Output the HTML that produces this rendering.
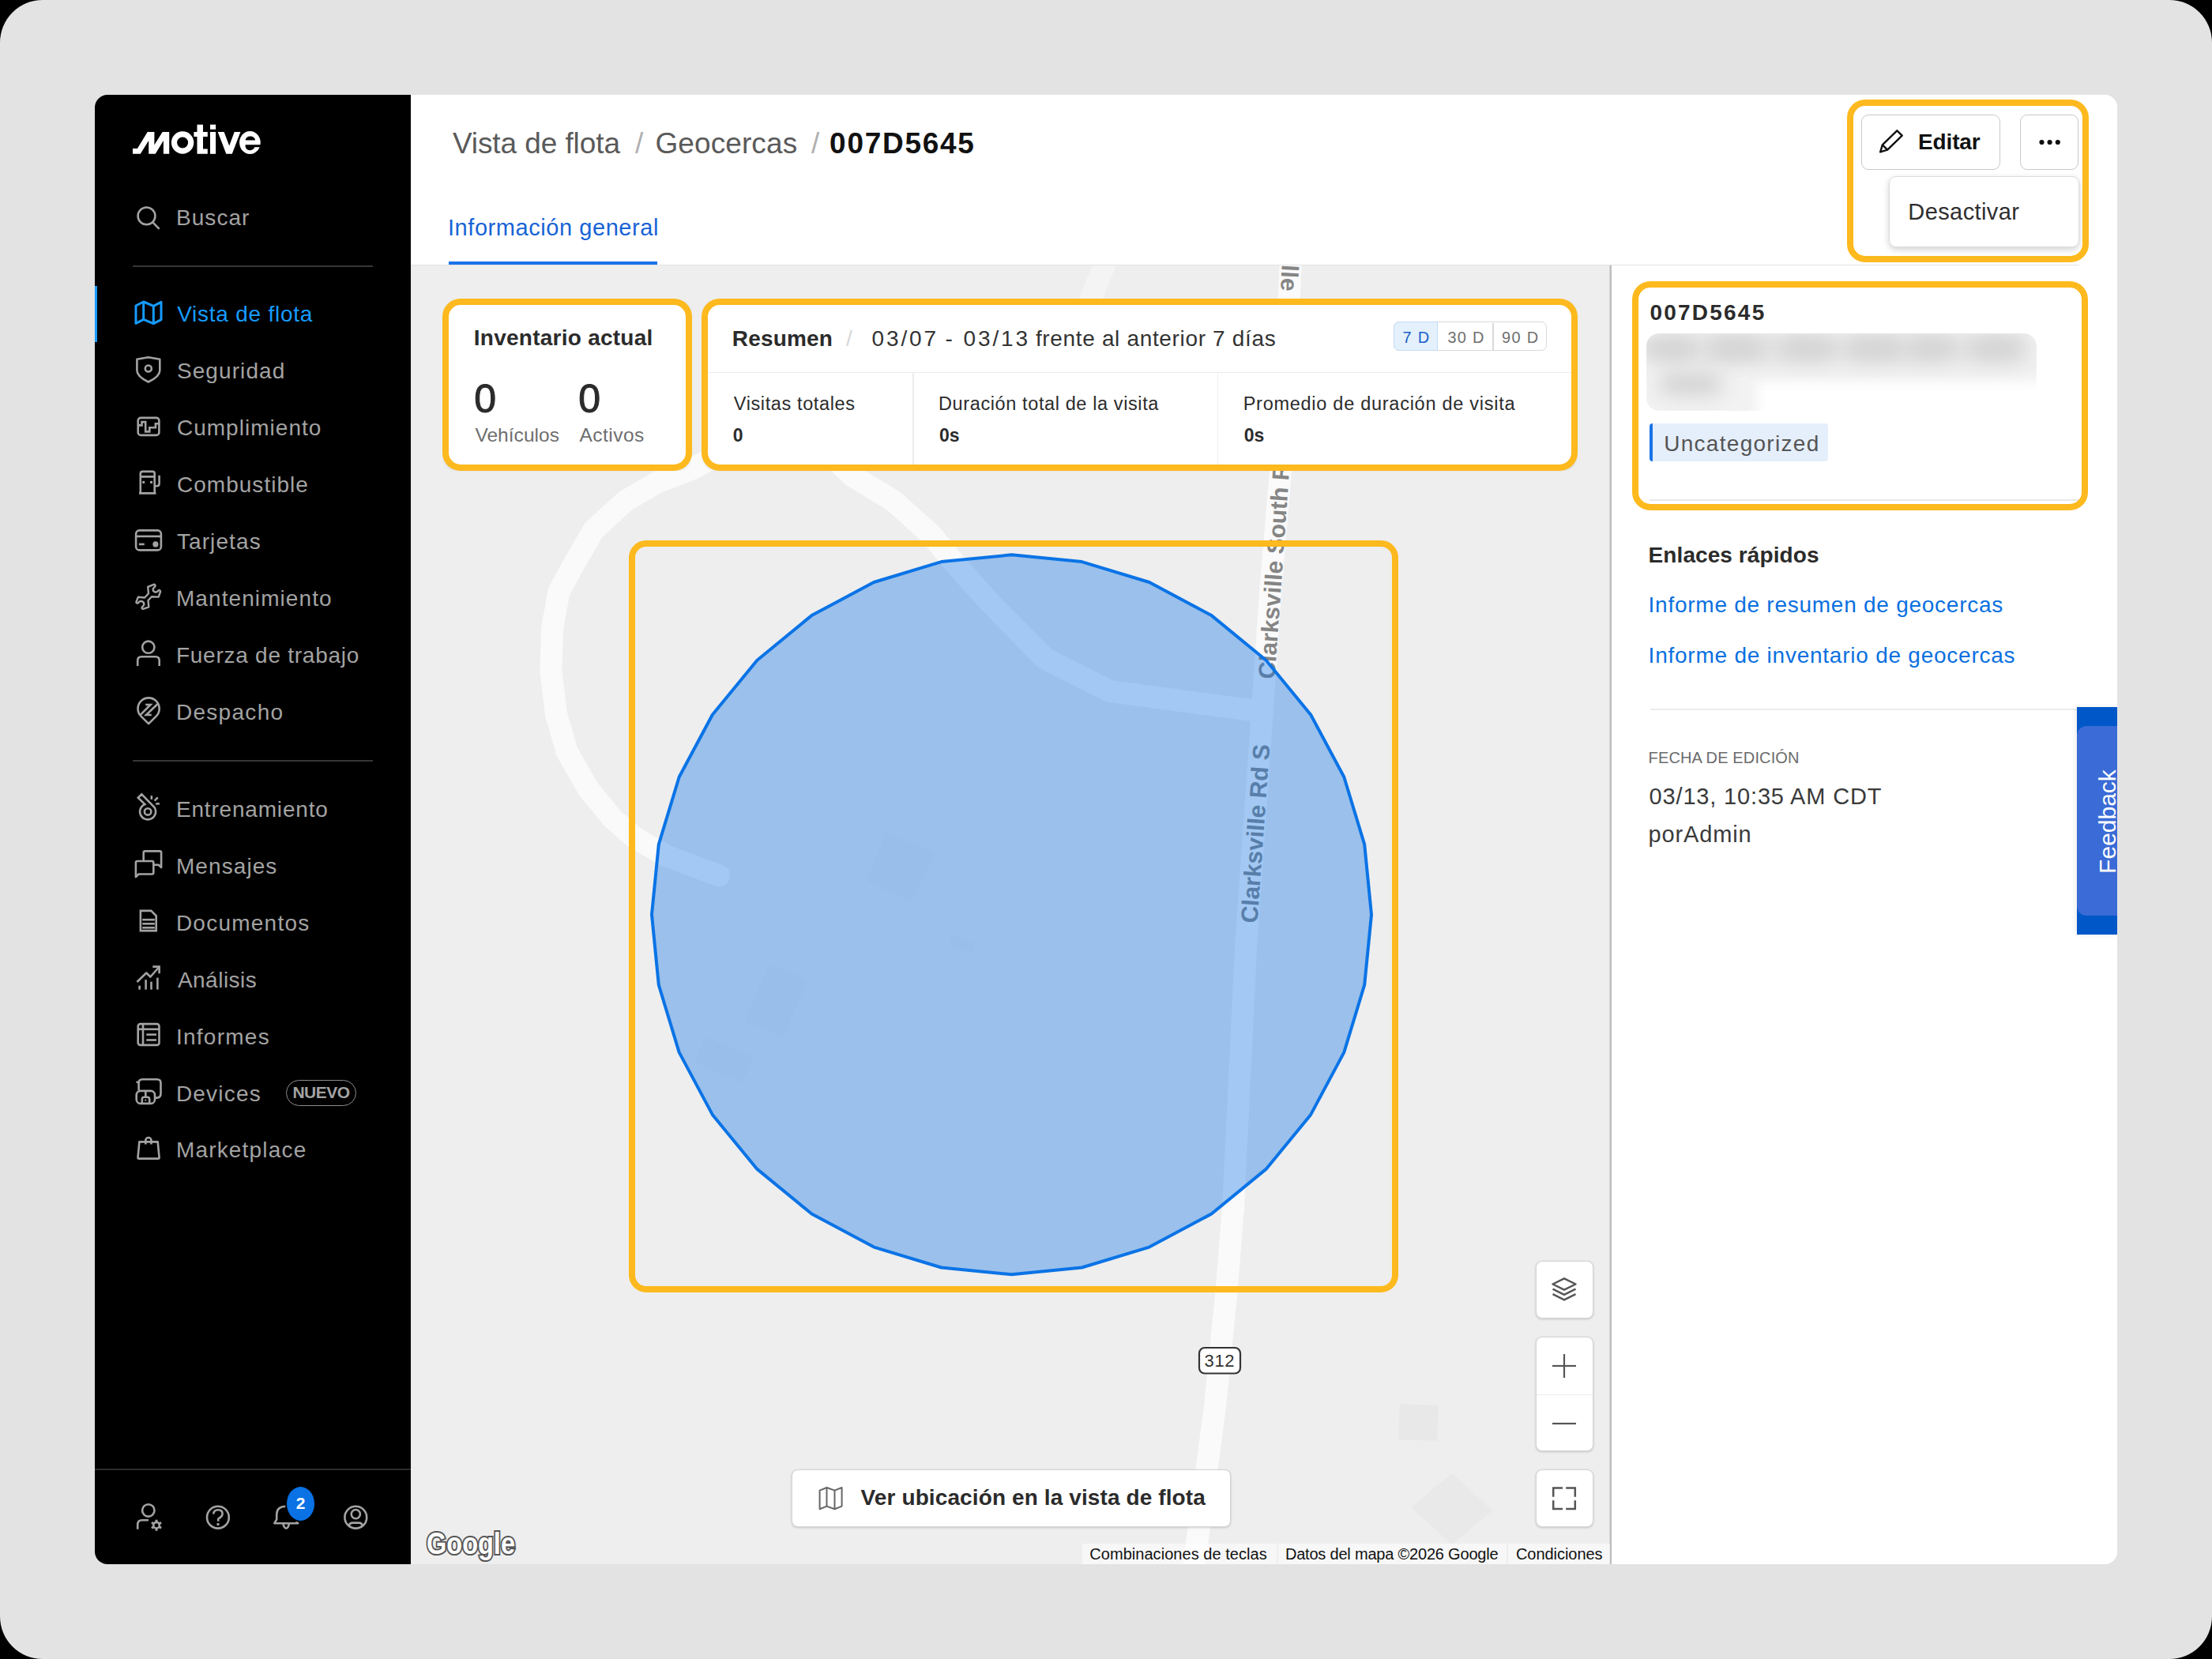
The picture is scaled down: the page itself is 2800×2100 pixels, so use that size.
<!DOCTYPE html>
<html><head><meta charset="utf-8"><title>Geocerca 007D5645</title>
<style>
html,body{margin:0;padding:0}
body{width:2800px;height:2100px;background:#000;overflow:hidden;position:relative;font-family:"Liberation Sans",sans-serif}
.t{position:absolute;white-space:nowrap;line-height:1}
</style></head><body>
<div style="position:absolute;left:0;top:0;width:2800px;height:2100px;background:#e3e3e3;border-radius:54px"></div>
<div style="position:absolute;left:120px;top:120px;width:2560px;height:1860px;border-radius:16px;overflow:hidden;background:#fff">
<div style="position:absolute;left:-120px;top:-120px;width:2800px;height:2100px">
<div style="position:absolute;left:120px;top:120px;width:400.0px;height:1860.0px;background:#000"></div>
<div style="position:absolute;left:168px;top:335.5px;width:304.0px;height:2.0px;background:#363636"></div>
<div style="position:absolute;left:168px;top:962px;width:304.0px;height:2.0px;background:#363636"></div>
<div style="position:absolute;left:120px;top:1859px;width:400.0px;height:2.0px;background:#2c2c2c"></div>
<div style="position:absolute;left:120px;top:362px;width:3.0px;height:71.0px;background:#169bff"></div>
<div style="position:absolute;left:361.9px;top:1366.8px;width:87.2px;height:31.5px;border:1.5px solid #8c8c8c;border-radius:18px"></div>
<div style="position:absolute;left:520px;top:120px;width:2160.0px;height:216.0px;background:#fff"></div>
<div style="position:absolute;left:520px;top:334.6px;width:2112.0px;height:1.4px;background:#e2e2e2"></div>
<div style="position:absolute;left:568px;top:331px;width:264.0px;height:4.0px;background:#1a73e8"></div>
<div style="position:absolute;left:2355.5px;top:144.5px;width:174px;height:68px;border:1.5px solid #c9c9c9;border-radius:9px;background:#fff"></div>
<div style="position:absolute;left:2557.3px;top:144.5px;width:71.4px;height:68px;border:1.5px solid #c9c9c9;border-radius:9px;background:#fff"></div>
<div style="position:absolute;left:2391.3px;top:223px;width:239.2px;height:87.6px;border:1px solid #dcdcdc;border-radius:9px;background:#fff;box-shadow:0 3px 8px rgba(0,0,0,.18)"></div>
<svg style="position:absolute;left:520px;top:336px" width="1518" height="1644" viewBox="520 336 1518 1644">
<rect x="520" y="336" width="1518" height="1644" fill="#eeeeee"/>
<path d="M1400,330 L1372,400" stroke="#f4f4f4" stroke-width="28" fill="none"/>
<path d="M910,1108.3 L842.5,1083 L802,1059.3 L775,1035.7 L744.6,998.6 L717.6,951.3 L704,904 L697.4,850 L699,796 L707.5,748.8 L727.8,711.6 L751.4,671 L791.9,634 L832.4,610.4 L876.3,593.5 L930,565 L1000,550 L1045,570 L1079,602.6 L1131,634 L1178.7,677 L1212.6,718 L1253.3,763 L1322.7,833.6 L1405,874.9 L1598,901" stroke="#fafafa" stroke-width="28" fill="none" stroke-linecap="round" stroke-linejoin="round"/>
<path d="M1634,330 L1621,597 L1608.8,740 L1599.6,874 L1595,940 L1577,1200 L1561,1530 L1552,1640 L1538,1780 L1511,1985" stroke="#fafafa" stroke-width="28" fill="none" stroke-linejoin="round"/>
<g fill="#ebebeb">
<polygon points="1122,1053.7 1183.5,1079 1154.5,1140.5 1096.7,1115.2"/>
<polygon points="1205,1182 1234,1194.8 1228.7,1207.4 1199.7,1194.8"/>
<polygon points="973.7,1220 1022.5,1240 991.8,1312.3 943,1292.4"/>
<polygon points="892.3,1312.3 953.8,1337.6 939.3,1370.2 879.7,1344.9"/>
</g>
<rect x="1771" y="1778" width="49" height="45" fill="#e8e8e8" transform="rotate(2 1795 1800)"/>
<polygon points="1838,1865 1889,1912 1838,1955 1786,1908" fill="#e9e9e9"/>
<g font-family="Liberation Sans" font-weight="bold" font-size="30" fill="#858585">
<text transform="translate(1591.5 1169) rotate(-86)">Clarksville Rd S</text>
<text transform="translate(1613.5 860) rotate(-86)">Clarksville South Rd</text>
<text transform="translate(1628.9 218.2) rotate(93)">Clarksville</text>
</g>
<polygon points="1736.0,1157.8 1727.2,1246.7 1701.3,1332.1 1659.2,1410.9 1602.6,1479.9 1533.6,1536.5 1454.8,1578.6 1369.4,1604.5 1280.5,1613.3 1191.6,1604.5 1106.2,1578.6 1027.4,1536.5 958.4,1479.9 901.8,1410.9 859.7,1332.1 833.8,1246.7 825.0,1157.8 833.8,1068.9 859.7,983.5 901.8,904.7 958.4,835.7 1027.4,779.1 1106.2,737.0 1191.6,711.1 1280.5,702.3 1369.4,711.1 1454.8,737.0 1533.6,779.1 1602.6,835.7 1659.2,904.7 1701.3,983.5 1727.2,1068.9" fill="#0b73e6" fill-opacity="0.37" stroke="#0a73e6" stroke-width="4" stroke-linejoin="round"/>
<rect x="1518" y="1706" width="52" height="32.5" rx="7" fill="#fff" stroke="#333" stroke-width="2.2"/>
<text x="540" y="1967" font-family="Liberation Sans" font-weight="bold" font-size="39" fill="#fff" stroke="#555" stroke-width="4.2" paint-order="stroke" textLength="112" lengthAdjust="spacingAndGlyphs">Google</text>
</svg>
<div style="position:absolute;left:2037px;top:336px;width:1.0px;height:1644.0px;background:#d8d8d8"></div>
<div style="position:absolute;left:2038px;top:336px;width:1.5px;height:1644.0px;background:#bdbdbd"></div>
<div style="position:absolute;left:1943.6px;top:1596px;width:73.0px;height:73.0px;border:1px solid #d4d4d4;border-radius:8px;background:#fff;box-shadow:0 1px 3px rgba(0,0,0,.18);box-sizing:border-box"></div>
<div style="position:absolute;left:1943.6px;top:1692.2px;width:73.0px;height:145.1px;border:1px solid #d4d4d4;border-radius:8px;background:#fff;box-shadow:0 1px 3px rgba(0,0,0,.18);box-sizing:border-box"></div>
<div style="position:absolute;left:1944.6px;top:1764.7px;width:71.0px;height:1.2px;background:#ececec"></div>
<div style="position:absolute;left:1943.6px;top:1860.3px;width:73.0px;height:73.2px;border:1px solid #d4d4d4;border-radius:8px;background:#fff;box-shadow:0 1px 3px rgba(0,0,0,.18);box-sizing:border-box"></div>
<div style="position:absolute;left:1001.8px;top:1860px;width:556.6px;height:73.4px;border:1px solid #d4d4d4;border-radius:8px;background:#fff;box-shadow:0 1px 3px rgba(0,0,0,.18);box-sizing:border-box"></div>
<div style="position:absolute;left:1369.5px;top:1953.5px;width:246.9px;height:26.5px;background:rgba(255,255,255,.5)"></div>
<div style="position:absolute;left:1617.5px;top:1953.5px;width:289.5px;height:26.5px;background:rgba(255,255,255,.5)"></div>
<div style="position:absolute;left:1909px;top:1953.5px;width:129.0px;height:26.5px;background:rgba(255,255,255,.5)"></div>
<div style="position:absolute;left:564px;top:382px;width:308.0px;height:210.0px;background:#fff;border-radius:14px;box-shadow:0 1px 4px rgba(0,0,0,.3)"></div>
<div style="position:absolute;left:892px;top:382px;width:1101.0px;height:210.0px;background:#fff;border-radius:14px;box-shadow:0 1px 4px rgba(0,0,0,.3)"></div>
<div style="position:absolute;left:896px;top:470.5px;width:1094.0px;height:1.5px;background:#ececec"></div>
<div style="position:absolute;left:1155.2px;top:472px;width:1.5px;height:118.0px;background:#ececec"></div>
<div style="position:absolute;left:1540.8px;top:472px;width:1.5px;height:118.0px;background:#ececec"></div>
<div style="position:absolute;left:1764px;top:407.2px;width:192.3px;height:35.1px;border:1.5px solid #d9d9d9;border-radius:7px;background:#fff"></div>
<div style="position:absolute;left:1764px;top:407.2px;width:54.4px;height:35.1px;border:1.5px solid #c3dcf5;border-radius:7px 0 0 7px;background:#e4f0fc"></div>
<div style="position:absolute;left:1889.3px;top:408.7px;width:1.5px;height:35.1px;background:#d9d9d9"></div>
<div style="position:absolute;left:2040px;top:336px;width:640.0px;height:1644.0px;background:#fff"></div>
<div style="position:absolute;left:2087.6px;top:632px;width:547.2px;height:1.5px;background:#e8e8e8"></div>
<div style="position:absolute;left:2088.6px;top:897px;width:540.4px;height:2.0px;background:#ececec"></div>
<div style="position:absolute;left:2087.6px;top:536px;width:226.0px;height:47.6px;background:#e5effb;border-radius:4px"></div>
<div style="position:absolute;left:2087.6px;top:536px;width:4.0px;height:47.6px;background:#1a73e8;border-radius:4px 0 0 4px"></div>
<div style="position:absolute;left:2084px;top:422px;width:494px;height:98px;overflow:hidden;border-radius:16px"><div style="position:absolute;left:-10px;top:-10px;width:514px;height:70px;background:#f0f0f0;filter:blur(8px)"></div><div style="position:absolute;left:-10px;top:40px;width:150px;height:70px;background:#f2f2f2;filter:blur(8px)"></div><div style="position:absolute;left:20px;top:6px;width:460px;height:26px;background:#e2e2e2;border-radius:12px;filter:blur(12px)"></div><div style="position:absolute;left:-7px;top:5px;width:70px;height:28px;background:#d2d2d2;border-radius:14px;filter:blur(12px)"></div><div style="position:absolute;left:78px;top:5px;width:72px;height:28px;background:#d2d2d2;border-radius:14px;filter:blur(12px)"></div><div style="position:absolute;left:168px;top:5px;width:70px;height:28px;background:#d2d2d2;border-radius:14px;filter:blur(12px)"></div><div style="position:absolute;left:253px;top:5px;width:72px;height:28px;background:#d2d2d2;border-radius:14px;filter:blur(12px)"></div><div style="position:absolute;left:329px;top:5px;width:62px;height:28px;background:#d2d2d2;border-radius:14px;filter:blur(12px)"></div><div style="position:absolute;left:408px;top:5px;width:70px;height:28px;background:#d2d2d2;border-radius:14px;filter:blur(12px)"></div><div style="position:absolute;left:16px;top:50px;width:80px;height:28px;background:#d2d2d2;border-radius:14px;filter:blur(12px)"></div></div>
<div style="position:absolute;left:2629px;top:895px;width:51.0px;height:288.0px;background:#0057c8;box-shadow:-2px 0 6px rgba(0,0,0,.08)"></div>
<div style="position:absolute;left:2629px;top:918.6px;width:71.0px;height:240.2px;background:#3a6bd6;border-radius:12px"></div>
<div style="position:absolute;left:2518px;top:1025px;width:300px;height:30px;transform:rotate(-90deg);transform-origin:center;font-size:30px;line-height:30px;color:#fff;text-align:center;white-space:nowrap" >Feedback</div>
<div class="t" id="buscar" style="left:222.9px;top:262.1px;font-size:28px;font-weight:400;color:#a3a3a3;letter-spacing:1.08px">Buscar</div>
<div class="t" id="vista" style="left:224.2px;top:383.9px;font-size:28px;font-weight:400;color:#169bff;letter-spacing:0.75px">Vista de flota</div>
<div class="t" id="seg" style="left:223.9px;top:456.3px;font-size:28px;font-weight:400;color:#a3a3a3;letter-spacing:1.10px">Seguridad</div>
<div class="t" id="cump" style="left:223.9px;top:528.3px;font-size:28px;font-weight:400;color:#a3a3a3;letter-spacing:1.03px">Cumplimiento</div>
<div class="t" id="comb" style="left:223.9px;top:599.9px;font-size:28px;font-weight:400;color:#a3a3a3;letter-spacing:1.04px">Combustible</div>
<div class="t" id="tarj" style="left:223.9px;top:672.3px;font-size:28px;font-weight:400;color:#a3a3a3;letter-spacing:1.10px">Tarjetas</div>
<div class="t" id="mant" style="left:222.9px;top:744.1px;font-size:28px;font-weight:400;color:#a3a3a3;letter-spacing:1.09px">Mantenimiento</div>
<div class="t" id="fuer" style="left:222.9px;top:815.9px;font-size:28px;font-weight:400;color:#a3a3a3;letter-spacing:0.75px">Fuerza de trabajo</div>
<div class="t" id="desp" style="left:222.9px;top:887.7px;font-size:28px;font-weight:400;color:#a3a3a3;letter-spacing:1.30px">Despacho</div>
<div class="t" id="entr" style="left:222.9px;top:1010.5px;font-size:28px;font-weight:400;color:#a3a3a3;letter-spacing:0.82px">Entrenamiento</div>
<div class="t" id="mens" style="left:222.9px;top:1082.9px;font-size:28px;font-weight:400;color:#a3a3a3;letter-spacing:1.09px">Mensajes</div>
<div class="t" id="docs" style="left:222.9px;top:1154.5px;font-size:28px;font-weight:400;color:#a3a3a3;letter-spacing:1.24px">Documentos</div>
<div class="t" id="anal" style="left:224.9px;top:1226.9px;font-size:28px;font-weight:400;color:#a3a3a3;letter-spacing:0.49px">Análisis</div>
<div class="t" id="info" style="left:222.9px;top:1298.7px;font-size:28px;font-weight:400;color:#a3a3a3;letter-spacing:1.26px">Informes</div>
<div class="t" id="devi" style="left:222.9px;top:1370.5px;font-size:28px;font-weight:400;color:#a3a3a3;letter-spacing:1.20px">Devices</div>
<div class="t" id="nuevo" style="left:370.5px;top:1372.4px;font-size:21px;font-weight:700;color:#a3a3a3;letter-spacing:-0.55px">NUEVO</div>
<div class="t" id="mark" style="left:222.9px;top:1442.3px;font-size:28px;font-weight:400;color:#a3a3a3;letter-spacing:1.18px">Marketplace</div>
<div class="t" id="bc1" style="left:572.9px;top:162.9px;font-size:37px;font-weight:400;color:#5a5a5a;letter-spacing:-0.09px">Vista de flota</div>
<div class="t" id="bcs1" style="left:804.0px;top:162.9px;font-size:37px;font-weight:400;color:#b0b0b0">/</div>
<div class="t" id="bc2" style="left:829.5px;top:162.9px;font-size:37px;font-weight:400;color:#5a5a5a;letter-spacing:0.09px">Geocercas</div>
<div class="t" id="bcs2" style="left:1027.0px;top:162.9px;font-size:37px;font-weight:400;color:#b0b0b0">/</div>
<div class="t" id="bc3" style="left:1050.1px;top:162.8px;font-size:37px;font-weight:700;color:#111111;letter-spacing:1.71px">007D5645</div>
<div class="t" id="tab" style="left:567.0px;top:273.7px;font-size:29px;font-weight:400;color:#1763d6;letter-spacing:0.56px">Información general</div>
<div class="t" id="editar" style="left:2427.9px;top:166.3px;font-size:28px;font-weight:700;color:#111111;letter-spacing:-0.10px">Editar</div>
<div class="t" id="desact" style="left:2415.3px;top:253.5px;font-size:29px;font-weight:400;color:#2e2e2e;letter-spacing:0.41px">Desactivar</div>
<div class="t" id="inv" style="left:599.8px;top:414.3px;font-size:28px;font-weight:700;color:#2b2b2b;letter-spacing:0.25px">Inventario actual</div>
<div class="t" id="z1" style="left:600.3px;top:480.3px;font-size:50px;font-weight:400;color:#2b2b2b;-webkit-text-stroke:1.1px #2b2b2b">0</div>
<div class="t" id="z2" style="left:732.3px;top:480.3px;font-size:50px;font-weight:400;color:#2b2b2b;-webkit-text-stroke:1.1px #2b2b2b">0</div>
<div class="t" id="veh" style="left:601.4px;top:539.3px;font-size:24.5px;font-weight:400;color:#6e6e6e;letter-spacing:0.04px">Vehículos</div>
<div class="t" id="act" style="left:733.4px;top:539.3px;font-size:24.5px;font-weight:400;color:#6e6e6e;letter-spacing:0.48px">Activos</div>
<div class="t" id="resu" style="left:926.8px;top:414.7px;font-size:28px;font-weight:700;color:#2b2b2b;letter-spacing:0.18px">Resumen</div>
<div class="t" id="rsl" style="left:1071.0px;top:414.7px;font-size:28px;font-weight:400;color:#d6d6d6">/</div>
<div class="t" id="range1" style="left:1103.6px;top:414.7px;font-size:28px;font-weight:400;color:#333333;letter-spacing:2.85px">03/07</div>
<div class="t" id="range2" style="left:1196.4px;top:414.7px;font-size:28px;font-weight:400;color:#333333">-</div>
<div class="t" id="range3" style="left:1219.6px;top:414.7px;font-size:28px;font-weight:400;color:#333333;letter-spacing:2.83px">03/13</div>
<div class="t" id="range4" style="left:1310.9px;top:414.7px;font-size:28px;font-weight:400;color:#333333;letter-spacing:0.66px">frente al anterior 7 días</div>
<div class="t" id="d7" style="left:1775.4px;top:417.1px;font-size:20px;font-weight:400;color:#1a5fcc;letter-spacing:1.40px">7 D</div>
<div class="t" id="d30" style="left:1832.5px;top:417.1px;font-size:20px;font-weight:400;color:#707070;letter-spacing:1.20px">30 D</div>
<div class="t" id="d90" style="left:1901.0px;top:417.1px;font-size:20px;font-weight:400;color:#707070;letter-spacing:1.33px">90 D</div>
<div class="t" id="vt" style="left:928.8px;top:499.5px;font-size:23.5px;font-weight:400;color:#2b2b2b;letter-spacing:0.61px">Visitas totales</div>
<div class="t" id="vt0" style="left:927.8px;top:540.2px;font-size:23px;font-weight:700;color:#2b2b2b">0</div>
<div class="t" id="dt" style="left:1188.0px;top:499.5px;font-size:23.5px;font-weight:400;color:#2b2b2b;letter-spacing:0.61px">Duración total de la visita</div>
<div class="t" id="dt0" style="left:1189.0px;top:540.2px;font-size:23px;font-weight:700;color:#2b2b2b">0s</div>
<div class="t" id="pd" style="left:1573.7px;top:499.5px;font-size:23.5px;font-weight:400;color:#2b2b2b;letter-spacing:0.73px">Promedio de duración de visita</div>
<div class="t" id="pd0" style="left:1574.7px;top:540.2px;font-size:23px;font-weight:700;color:#2b2b2b">0s</div>
<div class="t" id="rid" style="left:2088.4px;top:382.1px;font-size:28px;font-weight:700;color:#2b2b2b;letter-spacing:2.23px">007D5645</div>
<div class="t" id="uncat" style="left:2106.2px;top:547.6px;font-size:28px;font-weight:400;color:#555555;letter-spacing:1.29px">Uncategorized</div>
<div class="t" id="enl" style="left:2086.6px;top:689.1px;font-size:28px;font-weight:700;color:#2b2b2b;letter-spacing:0.08px">Enlaces rápidos</div>
<div class="t" id="lnk1" style="left:2086.6px;top:752.1px;font-size:28px;font-weight:400;color:#0a70e0;letter-spacing:0.74px">Informe de resumen de geocercas</div>
<div class="t" id="lnk2" style="left:2086.6px;top:816.3px;font-size:28px;font-weight:400;color:#0a70e0;letter-spacing:0.76px">Informe de inventario de geocercas</div>
<div class="t" id="fecha" style="left:2086.6px;top:948.9px;font-size:20px;font-weight:400;color:#6b6b6b;letter-spacing:0.13px">FECHA DE EDICIÓN</div>
<div class="t" id="fdate" style="left:2087.6px;top:993.5px;font-size:29px;font-weight:400;color:#3a3a3a;letter-spacing:0.83px">03/13, 10:35 AM CDT</div>
<div class="t" id="por" style="left:2086.6px;top:1041.9px;font-size:29px;font-weight:400;color:#3a3a3a;letter-spacing:0.84px">porAdmin</div>
<div class="t" id="ver" style="left:1089.6px;top:1882.1px;font-size:28px;font-weight:700;color:#2b2b2b;letter-spacing:0.11px">Ver ubicación en la vista de flota</div>
<div class="t" id="att1" style="left:1379.3px;top:1956.8px;font-size:20px;font-weight:400;color:#111111;letter-spacing:0.04px">Combinaciones de teclas</div>
<div class="t" id="att2" style="left:1626.9px;top:1956.8px;font-size:20px;font-weight:400;color:#111111;letter-spacing:-0.20px">Datos del mapa ©2026 Google</div>
<div class="t" id="att3" style="left:1918.9px;top:1956.8px;font-size:20px;font-weight:400;color:#111111;letter-spacing:-0.04px">Condiciones</div>
<div class="t" id="r312" style="left:1524.6px;top:1711.7px;font-size:22px;font-weight:400;color:#333333;letter-spacing:0.65px">312</div>
<svg style="position:absolute;left:0;top:0" width="2800" height="2100" viewBox="0 0 2800 2100">
<g fill="#fff">
<polygon points="167.98,188.07 173.95,188.07 186.7,167.05 195.38,167.05 195.38,183.6 205.68,167.05 214.23,167.05 214.23,194.85 206.9,194.85 206.9,177.9 196.7,194.85 188.2,194.85 188.2,177.9 177.75,194.85 167.98,194.85"/>
<circle cx="231.1" cy="180.5" r="10.6" fill="none" stroke="#fff" stroke-width="7.2"/>
<path d="M249.5,157.7 H257 V167 H262.8 V173.1 H257 V188.4 H262.8 V194.8 H249.5 V173.1 H245.4 V167 H249.5 Z"/>
<rect x="266" y="157.7" width="7.1" height="6.1"/>
<rect x="266" y="167" width="7.1" height="27.8"/>
<polygon points="275.7,167 283.6,167 290.2,184.4 296.7,167 304.4,167 293.8,194.8 286.3,194.8"/>
<ellipse cx="316.4" cy="180.5" rx="13.3" ry="14.5"/>
<path d="M310.7,177.6 A6.15,5 0 0 1 323,177.6 Z" fill="#000"/>
<path d="M310.7,183.2 H330 V186.2 H322.3 A6,5.5 0 0 1 310.7,183.2 Z" fill="#000"/>
</g>
<g fill="none" stroke="#a3a3a3" stroke-width="2.6" stroke-linejoin="round">
<circle cx="185.5" cy="273.4" r="10.9"/>
<line x1="193.6" y1="281.6" x2="201.6" y2="289.8"/>
<path d="M173.4,454.8 L187.8,452.3 L202.3,454.8 V469 Q202.3,476.5 187.8,483.5 Q173.4,476.5 173.4,469 Z"/>
<circle cx="187.8" cy="466.5" r="4"/>
<rect x="174.7" y="528.9" width="26.7" height="22" rx="3.5"/>
<path d="M174.7,538.4 H179.5 V534.1 H184.2 V546.4 H189.3 V541.3 H196.9 V536.3 H201.4" stroke-linejoin="miter"/>
<path d="M177.8,624.4 V599.6 Q177.8,596.9 180.5,596.9 H193 Q195.7,596.9 195.7,599.6 V624.4 Z M176,624.4 H197.5 M177.8,603.4 H195.7"/>
<path d="M195.7,615.3 H198.5 Q201.6,615.3 201.6,612 V601.8"/>
<rect x="172.1" y="671.4" width="31.8" height="25" rx="4.5"/>
<line x1="172.1" y1="678.9" x2="203.9" y2="678.9"/>
<line x1="175.9" y1="688.9" x2="182.8" y2="688.9"/>
<path d="M187.2,742.8 L194.6,739.8 Q196.8,740 196.5,741.9 L193.8,745.3 A3.3,3.3 0 0 0 199.6,748.2 L201.2,747 Q203.3,747.5 203,749 L200.7,755.6 L192,755.2 L187.5,760 L188.3,768.4 L181.2,770.9 Q179.2,770.6 179.6,769.1 L182,766 A3.75,3.75 0 0 0 175.4,762.6 L174,763.7 Q172.2,763.3 172.5,761.9 L174.8,755.8 L183.2,756.5 L188,751.2 Z" stroke-width="2.4"/>
<circle cx="187.8" cy="819.2" r="7.6"/>
<path d="M174.2,843 V836 Q174.2,831.2 179,831.2 H196.8 Q201.7,831.2 201.7,836 V843"/>
<path d="M178.5,906.6 A13.6,13.6 0 1 1 197.7,906.6 L188.1,916.2 Z"/>
<path d="M184.2,892 H190.6 L178,904.6 M199.6,891 L185,905 H191.8" stroke-linejoin="miter"/>
<path d="M183.35,1018.1 A10,10 0 1 0 195.6,1022.1 L179.3,1005.4 L174.8,1009.8 Z" stroke-linejoin="miter"/>
<circle cx="187.1" cy="1027.4" r="4.2"/>
<line x1="191.8" y1="1007.2" x2="191.8" y2="1011.9"/>
<line x1="195.6" y1="1013.6" x2="199.8" y2="1009.4"/>
<line x1="197.2" y1="1017.4" x2="201.9" y2="1017.4"/>
<path d="M171.9,1110 V1092 Q171.9,1090 173.9,1090 H192.3 Q194.3,1090 194.3,1092 V1104.5 Q194.3,1106.5 192.3,1106.5 H175.5 Z"/>
<path d="M181.7,1090 V1079.4 Q181.7,1077.4 183.7,1077.4 H202.1 Q204.1,1077.4 204.1,1079.4 V1098 L200.7,1094.7 H194.3"/>
<path d="M177.9,1152.9 H191.3 L197.7,1159.3 V1178.1 H177.9 Z" stroke-linejoin="miter"/>
<line x1="180.2" y1="1164.2" x2="195.8" y2="1164.2"/>
<line x1="180.2" y1="1169.3" x2="195.8" y2="1169.3"/>
<line x1="180.2" y1="1174.3" x2="195.8" y2="1174.3"/>
<polyline points="173.4,1243 185.3,1231.5 190.4,1236.5 201,1224.5"/>
<polyline points="193.3,1223.6 201.6,1223.6 201.6,1232.2" stroke-linejoin="miter"/>
<line x1="176.6" y1="1247.7" x2="176.6" y2="1252.6"/>
<line x1="184.6" y1="1240.1" x2="184.6" y2="1252.6"/>
<line x1="191.5" y1="1242.7" x2="191.5" y2="1252.6"/>
<line x1="199.4" y1="1237.6" x2="199.4" y2="1252.6"/>
<rect x="174.7" y="1296.1" width="26.8" height="26.8" rx="3"/>
<line x1="174.7" y1="1302.8" x2="201.5" y2="1302.8"/>
<line x1="181" y1="1296.1" x2="181" y2="1322.9"/>
<line x1="185.3" y1="1309.6" x2="198" y2="1309.6"/>
<line x1="185.3" y1="1316.5" x2="198" y2="1316.5"/>
<path d="M175.6,1380 V1371 Q175.6,1366.3 180.3,1366.3 H198.8 Q203.5,1366.3 203.5,1371 V1384.6 Q203.5,1389.6 198.5,1389.6 H196.9"/>
<line x1="172.5" y1="1369.8" x2="175.6" y2="1369.8"/>
<rect x="172.7" y="1380.9" width="23.3" height="16" rx="5.2"/>
<path d="M179.8,1397 V1391.5 Q179.8,1388.8 182.5,1388.8 H186.5 Q189.2,1388.8 189.2,1391.5 V1397 M184.3,1380.9 V1388.8"/>
<path d="M176.4,1445.4 H199.7 L201.6,1465.2 Q201.7,1466.6 200.3,1466.6 H175.8 Q174.4,1466.6 174.5,1465.2 Z"/>
<path d="M184.3,1448.5 V1443.6 A3.6,3.6 0 0 1 191.5,1443.6 V1448.5"/>
<circle cx="187.8" cy="1911.9" r="7.7"/>
<path d="M174.2,1935.8 V1929.8 Q174.2,1924.2 179.8,1924.2 H187.9"/>
<circle cx="198" cy="1930.7" r="3.8"/><line x1="198.0" y1="1934.5" x2="198.0" y2="1937.7" stroke-width="3"/><line x1="194.7" y1="1932.6" x2="191.9" y2="1934.2" stroke-width="3"/><line x1="194.7" y1="1928.8" x2="191.9" y2="1927.2" stroke-width="3"/><line x1="198.0" y1="1926.9" x2="198.0" y2="1923.7" stroke-width="3"/><line x1="201.3" y1="1928.8" x2="204.1" y2="1927.2" stroke-width="3"/><line x1="201.3" y1="1932.6" x2="204.1" y2="1934.2" stroke-width="3"/>
<circle cx="275.9" cy="1920.7" r="13.9"/>
<path d="M270.2,1916.5 Q270.6,1911.2 276,1911.2 Q281.6,1911.2 281.6,1916.3 Q281.6,1919.6 276.2,1922.6 V1925.8"/>
<path d="M347.4,1928.2 L350.2,1923.4 V1917.2 Q350.2,1906.8 362.2,1906.8 Q374.2,1906.8 374.2,1917.2 V1923.4 L377.2,1928.2 Z"/>
<path d="M358.4,1928.6 Q359.5,1934.6 362.2,1934.6 Q364.9,1934.6 366,1928.6"/>
<circle cx="450.3" cy="1920.7" r="13.9"/>
<circle cx="450.3" cy="1916.6" r="5.6"/>
<path d="M441.6,1932 Q442.4,1927.6 446.4,1927.6 H454.2 Q458.2,1927.6 459,1932"/>
</g>
<circle cx="196.9" cy="688.9" r="3.6" fill="#a3a3a3"/>
<rect x="180.2" y="608.9" width="3" height="3" fill="#a3a3a3"/>
<rect x="190" y="608.9" width="3" height="3" fill="#a3a3a3"/>
<circle cx="276" cy="1929.5" r="1.7" fill="#a3a3a3"/>
<circle cx="184.3" cy="1392.6" r="1.1" fill="#a3a3a3"/>
<g fill="none" stroke="#169bff" stroke-width="3" stroke-linejoin="round">
<polygon points="172,387 181.7,382 194.3,387.4 204,382.4 204,404.6 194.3,409.7 181.7,404.3 172,409.3"/>
<line x1="181.7" y1="382" x2="181.7" y2="404.3"/>
<line x1="194.3" y1="387.4" x2="194.3" y2="409.7"/>
</g>
<g fill="none" stroke="#111" stroke-width="2.4" stroke-linejoin="round">
<path d="M2401.3,165.3 L2407.7,171.7 L2389.2,189.7 L2380.2,192.3 L2382.8,183.3 Z M2382.8,183.3 L2389.2,189.7"/>
</g>
<g fill="#111"><circle cx="2584.5" cy="180" r="3.1"/><circle cx="2594.6" cy="180" r="3.1"/><circle cx="2604.8" cy="180" r="3.1"/></g>
<g fill="none" stroke="#555" stroke-width="2.5" stroke-linejoin="round">
<polygon points="1980,1618.3 1994.5,1625.5 1980,1632.7 1965.5,1625.5"/>
<polyline points="1965.5,1631.6 1980,1638.8 1994.5,1631.6"/>
<polyline points="1965.5,1638.2 1980,1645.4 1994.5,1638.2"/>
<g stroke-width="2.2"><line x1="1965" y1="1729" x2="1995" y2="1729"/>
<line x1="1980" y1="1714" x2="1980" y2="1744"/>
<line x1="1965" y1="1802" x2="1995" y2="1802"/></g>
<path d="M1966.2,1894.8 V1883.5 H1978 M1982.2,1883.5 H1993.8 V1894.8 M1993.8,1899.2 V1910.1 H1982.2 M1978,1910.1 H1966.2 V1899.2" stroke-linejoin="miter"/>
</g>
<g fill="none" stroke="#666" stroke-width="2" stroke-linejoin="round">
<polygon points="1037.6,1886.6 1046.5,1883 1056.5,1886.6 1065.6,1883 1065.6,1906.6 1056.5,1910.2 1046.5,1906.6 1037.6,1910.2"/>
<line x1="1046.5" y1="1883" x2="1046.5" y2="1906.6"/>
<line x1="1056.5" y1="1886.6" x2="1056.5" y2="1910.2"/>
</g>
</svg>
<div style="position:absolute;left:363.2px;top:1881.5px;width:35px;height:43px;border-radius:50%;background:#0a72e4;box-shadow:0 0 0 2px #000"></div>
<div class="t" id="badge2" style="left:374.8px;top:1892.2px;font-size:21px;font-weight:700;color:#ffffff">2</div>
<div style="position:absolute;left:2338px;top:125.8px;width:306.0px;height:205.9px;border:8px solid #fdb91d;border-radius:23px;box-sizing:border-box"></div>
<div style="position:absolute;left:559.6px;top:377.7px;width:316.4px;height:218.3px;border:8px solid #fdb91d;border-radius:23px;box-sizing:border-box"></div>
<div style="position:absolute;left:888px;top:378px;width:1109.0px;height:217.8px;border:8px solid #fdb91d;border-radius:23px;box-sizing:border-box"></div>
<div style="position:absolute;left:2066px;top:356px;width:577.4px;height:289.7px;border:8px solid #fdb91d;border-radius:23px;box-sizing:border-box"></div>
<div style="position:absolute;left:796px;top:683.7px;width:973.5px;height:952.3px;border:8px solid #fdb91d;border-radius:22px;box-sizing:border-box"></div>
</div></div>
</body></html>
